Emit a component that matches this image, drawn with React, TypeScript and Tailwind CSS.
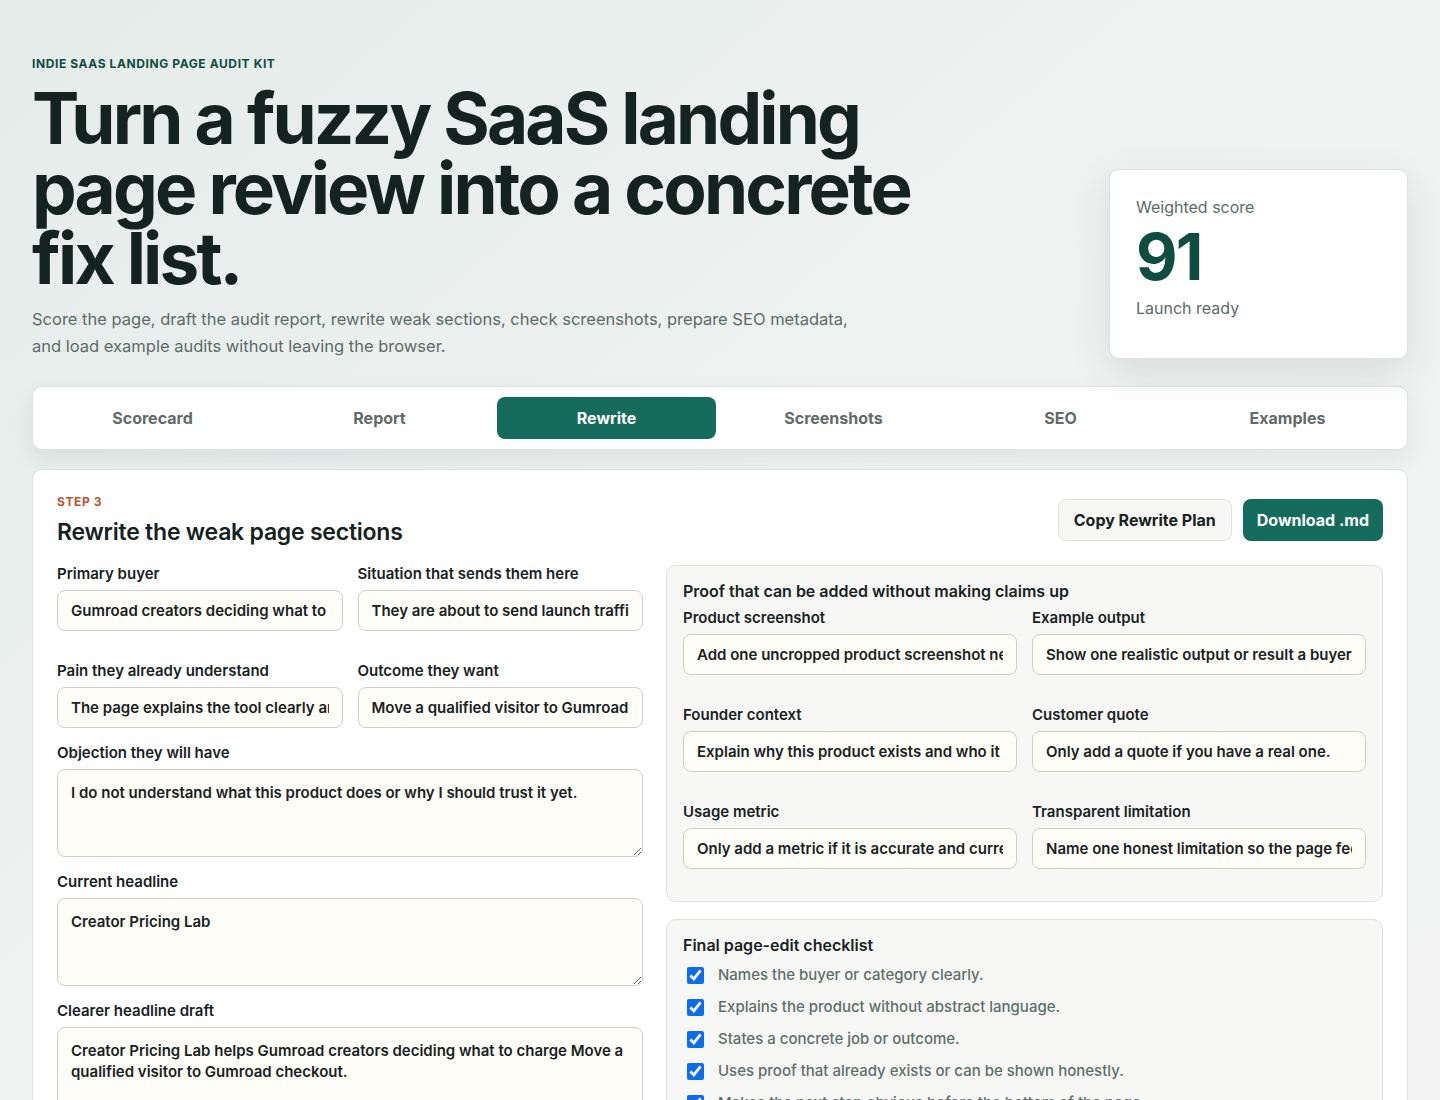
import React from "react";

const tabs = ["Scorecard", "Report", "Rewrite", "Screenshots", "SEO", "Examples"];

const proofFields = [
  { label: "Product screenshot", value: "Add one uncropped product screenshot near the top of the page." },
  { label: "Example output", value: "Show one realistic output or result a buyer would get." },
  { label: "Founder context", value: "Explain why this product exists and who it is for." },
  { label: "Customer quote", value: "Only add a quote if you have a real one." },
  { label: "Usage metric", value: "Only add a metric if it is accurate and current." },
  { label: "Transparent limitation", value: "Name one honest limitation so the page feels trustworthy." },
];

const checklist = [
  "Names the buyer or category clearly.",
  "Explains the product without abstract language.",
  "States a concrete job or outcome.",
  "Uses proof that already exists or can be shown honestly.",
  "Makes the next step obvious before the bottom of the page.",
];

const inputCls =
  "h-[41px] w-full rounded-lg border border-[#c9d1cd] bg-[#fffdf8] px-[13px] text-[15px] font-semibold text-[#18221f] outline-none";

const Field = ({ label, value }: { label: string; value: string }) => (
  <label className="flex flex-col gap-[7px]">
    <span className="text-[15px] font-semibold leading-[18px] text-[#18221f]">{label}</span>
    <input className={inputCls} defaultValue={value} readOnly />
  </label>
);

const AreaField = ({ label, value }: { label: string; value: string }) => (
  <label className="flex flex-col gap-[7px]">
    <span className="text-[15px] font-semibold leading-[18px] text-[#18221f]">{label}</span>
    <textarea
      className="h-[88px] w-full rounded-lg border border-[#c9d1cd] bg-[#fffdf8] px-[13px] py-[12px] text-[15px] font-semibold leading-[21px] text-[#18221f] outline-none"
      defaultValue={value}
      readOnly
    />
  </label>
);

export default function App() {
  return (
    <div
      className="min-h-[1100px] bg-gradient-to-br from-[#e4ecea] via-[#f0f3f2] to-[#f3f4f3] px-8 pt-[55px] pb-10"
      style={{ fontFamily: "Inter, 'Noto Sans', sans-serif" }}
    >
      {/* Hero */}
      <div className="flex items-end justify-between gap-8">
        <div className="max-w-[940px]">
          <p className="text-[12px] font-bold uppercase tracking-[0.05em] text-[#0f4d40]">
            Indie SaaS landing page audit kit
          </p>
          <h1 className="mt-[10px] text-[71px] font-bold leading-[70px] tracking-[-0.04em] text-[#142320]">
            Turn a fuzzy SaaS landing page review into a concrete fix list.
          </h1>
          <p className="mt-[13px] max-w-[830px] text-[16.5px] leading-[27px] text-[#5c6c67]">
            Score the page, draft the audit report, rewrite weak sections, check screenshots, prepare SEO metadata,
            and load example audits without leaving the browser.
          </p>
        </div>
        <div className="mb-[1px] w-[299px] rounded-[10px] border border-[#dbe2df] bg-white px-[26px] pt-[25px] pb-[38px] shadow-[0_14px_40px_rgba(30,50,45,0.12)]">
          <div className="text-[16px] text-[#5c6c67]">Weighted score</div>
          <div className="mt-[6px] text-[64px] font-bold leading-[64px] tracking-[-0.03em] text-[#0f4d41]">91</div>
          <div className="mt-[7px] text-[16px] text-[#5c6c67]">Launch ready</div>
        </div>
      </div>

      {/* Tabs */}
      <div className="mt-[26px] grid grid-cols-6 gap-2 rounded-[10px] border border-[#dbe2df] bg-white p-[10px] shadow-[0_10px_24px_rgba(30,50,45,0.08)]">
        {tabs.map((t) => (
          <button
            key={t}
            className={
              t === "Rewrite"
                ? "h-[42px] rounded-lg bg-[#156c5c] text-[16px] font-bold text-white"
                : "h-[42px] rounded-lg text-[16px] font-bold text-[#5f6b68]"
            }
          >
            {t}
          </button>
        ))}
      </div>

      {/* Main card */}
      <div className="mt-[19px] rounded-[10px] border border-[#dbe2df] bg-white px-6 pt-[24px] pb-10">
        <div className="flex items-start justify-between">
          <div>
            <div className="text-[12px] font-bold uppercase leading-[16px] tracking-[0.05em] text-[#c2522f]">Step 3</div>
            <h2 className="mt-[7px] text-[23px] font-semibold leading-[30px] tracking-[-0.01em] text-[#142320]">
              Rewrite the weak page sections
            </h2>
          </div>
          <div className="mt-[5px] flex gap-[11px]">
            <button className="h-[42px] rounded-lg border border-[#dbe2df] bg-[#f7f8f6] px-[15px] text-[16px] font-bold text-[#18221f]">
              Copy Rewrite Plan
            </button>
            <button className="h-[42px] rounded-lg bg-[#156c5c] px-[14px] text-[16px] font-bold text-white">
              Download .md
            </button>
          </div>
        </div>

        <div className="mt-[18px] grid grid-cols-[586px_minmax(0,1fr)] gap-[23px]">
          {/* Left column */}
          <div className="flex flex-col gap-4">
            <div className="grid grid-cols-2 gap-x-[15px] gap-y-[31px]">
              <Field label="Primary buyer" value="Gumroad creators deciding what to charge" />
              <Field label="Situation that sends them here" value="They are about to send launch traffic to the page." />
              <Field label="Pain they already understand" value="The page explains the tool clearly and converts." />
              <Field label="Outcome they want" value="Move a qualified visitor to Gumroad checkout." />
            </div>
            <AreaField label="Objection they will have" value="I do not understand what this product does or why I should trust it yet." />
            <AreaField label="Current headline" value="Creator Pricing Lab" />
            <AreaField
              label="Clearer headline draft"
              value="Creator Pricing Lab helps Gumroad creators deciding what to charge Move a qualified visitor to Gumroad checkout."
            />
          </div>

          {/* Right column */}
          <div className="flex flex-col gap-[17px]">
            <div className="rounded-[10px] border border-[#dbe2df] bg-[#f7f8f6] px-4 pt-[15px] pb-[32px]">
              <h3 className="text-[16px] font-semibold leading-[20px] text-[#18221f]">
                Proof that can be added without making claims up
              </h3>
              <div className="mt-[8px] grid grid-cols-2 gap-x-[15px] gap-y-[31px]">
                {proofFields.map((f) => (
                  <Field key={f.label} label={f.label} value={f.value} />
                ))}
              </div>
            </div>

            <div className="rounded-[10px] border border-[#dbe2df] bg-[#f7f8f6] px-4 pt-[15px] pb-6">
              <h3 className="text-[16px] font-semibold leading-[20px] text-[#18221f]">Final page-edit checklist</h3>
              <div className="mt-[10px] flex flex-col gap-[12px]">
                {checklist.map((c) => (
                  <label key={c} className="flex items-center gap-[14px] pl-[4px]">
                    <input type="checkbox" defaultChecked className="h-[17px] w-[17px] accent-[#0b6cf0]" />
                    <span className="text-[15px] font-medium leading-[20px] text-[#5f6e69]">{c}</span>
                  </label>
                ))}
              </div>
            </div>
          </div>
        </div>
      </div>
    </div>
  );
}
